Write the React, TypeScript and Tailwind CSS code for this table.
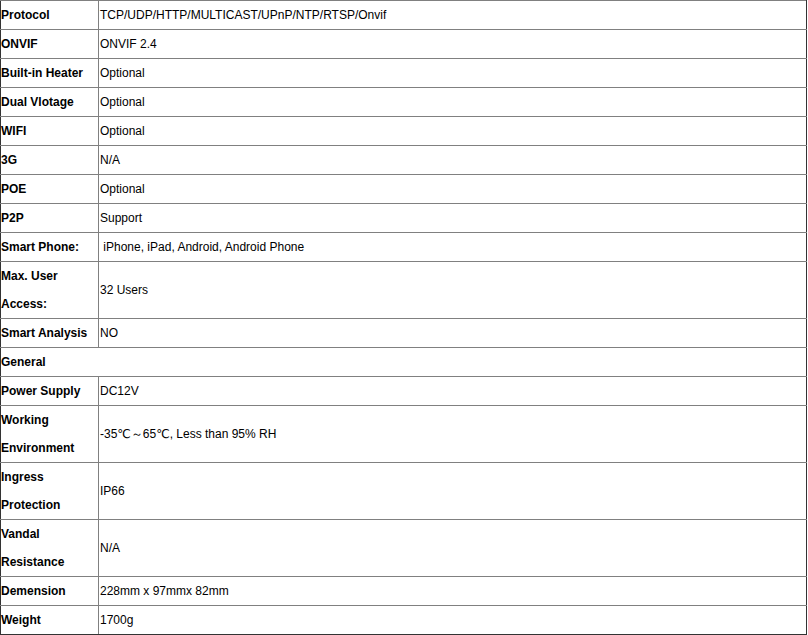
import React from "react";

type Row = { label: React.ReactNode; value?: React.ReactNode; tall?: boolean; full?: boolean };

const rows: Row[] = [
    { label: "Protocol", value: "TCP/UDP/HTTP/MULTICAST/UPnP/NTP/RTSP/Onvif" },
    { label: "ONVIF", value: "ONVIF 2.4" },
    { label: "Built-in Heater", value: "Optional" },
    { label: "Dual Vlotage", value: "Optional" },
    { label: "WIFI", value: "Optional" },
    { label: "3G", value: "N/A" },
    { label: "POE", value: "Optional" },
    { label: "P2P", value: "Support" },
    { label: "Smart Phone:", value: "\u00a0iPhone, iPad, Android, Android Phone" },
    { label: <>Max. User<br />Access:</>, value: "32 Users", tall: true },
    { label: "Smart Analysis", value: "NO" },
    { label: "General", full: true },
    { label: "Power Supply", value: "DC12V" },
    { label: <>Working<br />Environment</>, value: "-35℃～65℃, Less than 95% RH", tall: true },
    { label: <>Ingress<br />Protection</>, value: "IP66", tall: true },
    { label: <>Vandal<br />Resistance</>, value: "N/A", tall: true },
    { label: "Demension", value: "228mm x 97mmx 82mm" },
    { label: "Weight", value: "1700g" },
];

export default function App() {
    return (
        <div className="w-[808px] h-[635px] bg-white overflow-hidden" style={{ fontFamily: '"Liberation Sans", Arial, "DejaVu Sans", sans-serif' }}>
            <table className="border-collapse w-[807px] text-[12px] leading-[28px] text-black">
                <tbody>
                    {rows.map((r, i) => {
                        const last = i === rows.length - 1;
                        const h = r.tall ? "h-[56px]" : "h-[28px]";
                        const bottom = last ? "border-b-[#333333]" : "";
                        if (r.full) {
                            return (
                                <tr key={i}>
                                    <td colSpan={2} className={`${h} p-0 align-middle font-bold border border-[#808080] border-l-[#333333] border-r-[#333333] ${bottom}`}>
                                        {r.label}
                                    </td>
                                </tr>
                            );
                        }
                        return (
                            <tr key={i}>
                                <td className={`${h} w-[98px] p-0 align-middle font-bold border border-[#808080] border-l-[#333333] ${bottom}`}>
                                    {r.label}
                                </td>
                                <td className={`${h} p-0 pl-px align-middle border border-[#808080] border-r-[#333333] ${bottom}`}>
                                    {r.value}
                                </td>
                            </tr>
                        );
                    })}
                </tbody>
            </table>
        </div>
    );
}
